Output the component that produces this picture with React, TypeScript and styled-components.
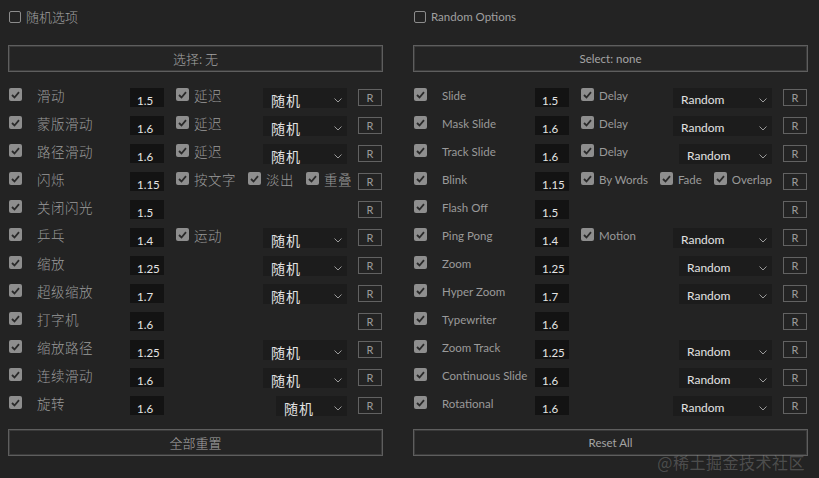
import React from 'react';
import styled, { createGlobalStyle } from 'styled-components';

const GlobalStyle = createGlobalStyle`
  html, body {
    margin: 0;
    padding: 0;
    background: #232323;
  }
  body {
    width: 819px;
    height: 478px;
    overflow: hidden;
    font-family: Lato, "Noto Sans CJK SC", sans-serif;
  }
`;

const Page = styled.div`
  position: relative;
  display: flex;
  gap: 30px;
  padding-left: 8px;
  width: 819px;
  height: 478px;
  box-sizing: border-box;
  background: #232323;
`;

const Panel = styled.div<{ $width: number }>`
  width: ${p => p.$width}px;
  display: flex;
  flex-direction: column;
`;

const Header = styled.div`
  display: flex;
  align-items: flex-start;
  gap: 5px;
  height: 35px;
  padding: 10px 0 0 1px;
  box-sizing: border-box;
`;

const EmptyBox = styled.span`
  width: 12px;
  height: 12px;
  border: 1.5px solid #8c8c8c;
  border-radius: 2px;
  box-sizing: border-box;
  margin-top: 1px;
`;

const HeaderLabel = styled.span<{ $cjk?: boolean }>`
  color: #a0a0a0;
  font-size: ${p => (p.$cjk ? '13px' : '11.5px')};
  font-weight: ${p => (p.$cjk ? 300 : 400)};
  line-height: 14px;
  font-family: ${p => (p.$cjk ? '"Noto Sans CJK SC", sans-serif' : 'Lato, "Noto Sans", sans-serif')};
`;

const WideButton = styled.div<{ $cjk?: boolean }>`
  height: 27px;
  border: 1px solid #5e5e5e;
  box-shadow: inset 0 0 0 1px #3a3a3a;
  box-sizing: border-box;
  display: flex;
  align-items: center;
  justify-content: center;
  color: #a4a4a4;
  font-size: ${p => (p.$cjk ? '13px' : '11.5px')};
  font-weight: ${p => (p.$cjk ? 300 : 400)};
  font-family: ${p => (p.$cjk ? '"Noto Sans CJK SC", sans-serif' : 'Lato, "Noto Sans", sans-serif')};
  background: #242424;
`;

const SelectButton = styled(WideButton)`
  margin-top: 10px;
`;

const ResetButton = styled(WideButton)`
  margin-top: 9px;
`;

const Rows = styled.div`
  margin-top: 12px;
  display: flex;
  flex-direction: column;
`;

const Row = styled.div`
  display: grid;
  grid-template-columns: 29px 93px 34px 11px 1fr 25px;
  align-items: start;
  height: 28px;
  padding-top: 4px;
  box-sizing: border-box;
`;

const Box = styled.span`
  width: 13px;
  height: 13px;
  border-radius: 2px;
  background: #8e8e8e;
  display: flex;
  align-items: center;
  justify-content: center;
  flex-shrink: 0;
  margin-left: 1px;
`;

const Label = styled.span<{ $cjk?: boolean }>`
  color: #9a9a9a;
  font-size: ${p => (p.$cjk ? '13.5px' : '11.5px')};
  font-weight: ${p => (p.$cjk ? 300 : 400)};
  line-height: 14px;
  font-family: ${p => (p.$cjk ? '"Noto Sans CJK SC", sans-serif' : 'Lato, "Noto Sans", sans-serif')};
  letter-spacing: ${p => (p.$cjk ? '0.5px' : '0')};
  white-space: nowrap;
  margin-top: ${p => (p.$cjk ? '0' : '1px')};
`;

const NumberBox = styled.div`
  height: 19px;
  background: #131313;
  color: #e4e4e4;
  font-family: Lato, "Noto Sans", sans-serif;
  font-size: 11.5px;
  line-height: 19px;
  padding: 3px 0 0 7px;
  box-sizing: border-box;
  overflow: hidden;
`;

const Middle = styled.div`
  grid-column: 5;
  display: flex;
  align-items: flex-start;
  gap: 11px;
`;

const Option = styled.span`
  display: flex;
  align-items: flex-start;
  gap: 5px;
`;

const Dropdown = styled.div<{ $width: number; $cjk?: boolean }>`
  margin-left: auto;
  margin-right: 11px;
  width: ${p => p.$width}px;
  height: 20px;
  background: #1c1c1c;
  box-sizing: border-box;
  padding: 4px 5px 0 8px;
  display: flex;
  justify-content: space-between;
  align-items: center;
  color: #e2e2e2;
  font-size: ${p => (p.$cjk ? '14px' : '12px')};
  line-height: 16px;
  font-family: ${p => (p.$cjk ? '"Noto Sans CJK SC", sans-serif' : 'Lato, "Noto Sans", sans-serif')};
  letter-spacing: ${p => (p.$cjk ? '1px' : '0')};
`;

const Chevron = styled.svg`
  margin-top: 1px;
`;

const RButton = styled.div`
  grid-column: 6;
  width: 24px;
  height: 17px;
  border: 1px solid #626262;
  box-sizing: border-box;
  color: #9a9a9a;
  font-family: Lato, "Noto Sans", sans-serif;
  font-size: 11px;
  display: flex;
  align-items: center;
  justify-content: center;
  margin-top: 1px;
`;

const Watermark = styled.div`
  position: absolute;
  right: 14px;
  bottom: 6px;
  color: rgba(255, 255, 255, 0.2);
  font-family: "Noto Sans CJK SC", sans-serif;
  font-size: 16px;
  line-height: 20px;
  letter-spacing: 0.5px;
`;

const Check = () => (
  <Box>
    <svg width="9" height="8" viewBox="0 0 9 8">
      <polyline points="1,4 3.5,6.5 8,1.2" fill="none" stroke="#2a2a2a" strokeWidth="1.8" />
    </svg>
  </Box>
);

interface RowData {
  name: string;
  value: string;
  options?: string[];
  dropdown?: number;
}

const left: RowData[] = [
  { name: '滑动', value: '1.5', options: ['延迟'], dropdown: 84 },
  { name: '蒙版滑动', value: '1.6', options: ['延迟'], dropdown: 84 },
  { name: '路径滑动', value: '1.6', options: ['延迟'], dropdown: 84 },
  { name: '闪烁', value: '1.15', options: ['按文字', '淡出', '重叠'] },
  { name: '关闭闪光', value: '1.5' },
  { name: '乒乓', value: '1.4', options: ['运动'], dropdown: 84 },
  { name: '缩放', value: '1.25', dropdown: 84 },
  { name: '超级缩放', value: '1.7', dropdown: 84 },
  { name: '打字机', value: '1.6' },
  { name: '缩放路径', value: '1.25', dropdown: 84 },
  { name: '连续滑动', value: '1.6', dropdown: 84 },
  { name: '旋转', value: '1.6', dropdown: 71 },
];

const right: RowData[] = [
  { name: 'Slide', value: '1.5', options: ['Delay'], dropdown: 99 },
  { name: 'Mask Slide', value: '1.6', options: ['Delay'], dropdown: 99 },
  { name: 'Track Slide', value: '1.6', options: ['Delay'], dropdown: 93 },
  { name: 'Blink', value: '1.15', options: ['By Words', 'Fade', 'Overlap'] },
  { name: 'Flash Off', value: '1.5' },
  { name: 'Ping Pong', value: '1.4', options: ['Motion'], dropdown: 99 },
  { name: 'Zoom', value: '1.25', dropdown: 93 },
  { name: 'Hyper Zoom', value: '1.7', dropdown: 93 },
  { name: 'Typewriter', value: '1.6' },
  { name: 'Zoom Track', value: '1.25', dropdown: 93 },
  { name: 'Continuous Slide', value: '1.6', dropdown: 93 },
  { name: 'Rotational', value: '1.6', dropdown: 99 },
];

const EffectPanel = ({
  width, cjk, title, select, reset, rows, random,
}: {
  width: number; cjk?: boolean; title: string; select: string; reset: string; rows: RowData[]; random: string;
}) => (
  <Panel $width={width}>
    <Header>
      <EmptyBox />
      <HeaderLabel $cjk={cjk}>{title}</HeaderLabel>
    </Header>
    <SelectButton $cjk={cjk}>{select}</SelectButton>
    <Rows>
      {rows.map(r => (
        <Row key={r.name}>
          <Check />
          <Label $cjk={cjk}>{r.name}</Label>
          <NumberBox>{r.value}</NumberBox>
          <Middle>
            {(r.options || []).map(o => (
              <Option key={o}>
                <Check />
                <Label $cjk={cjk}>{o}</Label>
              </Option>
            ))}
            {r.dropdown && (
              <Dropdown $width={r.dropdown} $cjk={cjk}>
                <span>{random}</span>
                <Chevron width="8" height="5" viewBox="0 0 8 5">
                  <polyline points="0.5,0.5 4,4 7.5,0.5" fill="none" stroke="#9a9a9a" strokeWidth="1" />
                </Chevron>
              </Dropdown>
            )}
          </Middle>
          <RButton>R</RButton>
        </Row>
      ))}
    </Rows>
    <ResetButton $cjk={cjk}>{reset}</ResetButton>
  </Panel>
);

export default function App() {
  return (
    <>
      <GlobalStyle />
      <Page>
        <EffectPanel width={375} cjk title="随机选项" select="选择: 无" reset="全部重置" rows={left} random="随机" />
        <EffectPanel width={395} title="Random Options" select="Select: none" reset="Reset All" rows={right} random="Random" />
        <Watermark>@稀土掘金技术社区</Watermark>
      </Page>
    </>
  );
}
